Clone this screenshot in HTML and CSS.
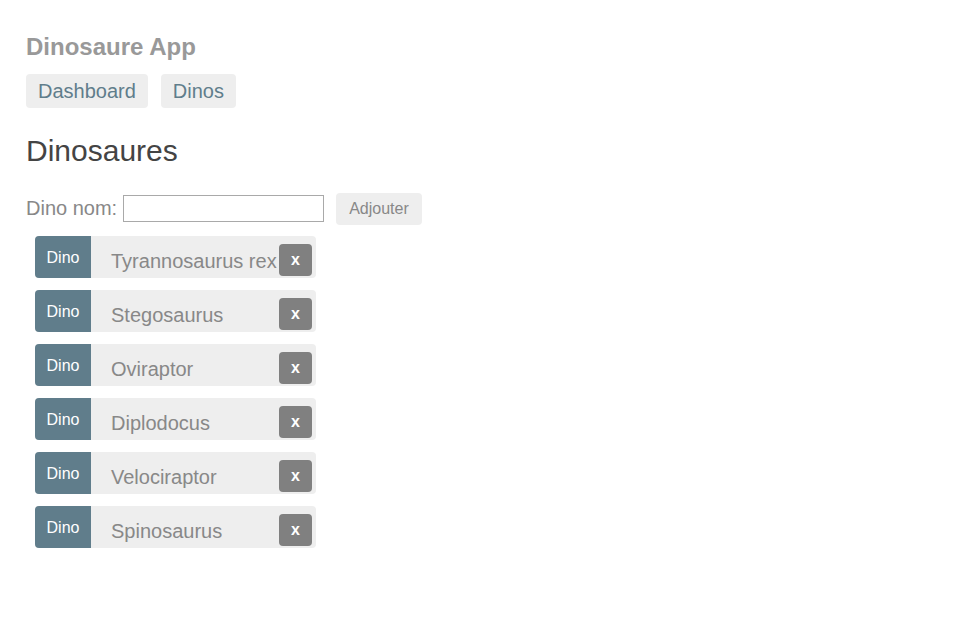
FILE: index.html
```html
<!DOCTYPE html>
<html lang="fr">
<head>
<meta charset="utf-8">
<title>Dinosaure App</title>
<link rel="stylesheet" href="styles.css">
</head>
<body>
<div class="app">
  <h1 class="app-title">Dinosaure App</h1>
  <nav class="nav">
    <a class="nav-link" href="#">Dashboard</a>
    <a class="nav-link" href="#">Dinos</a>
  </nav>
  <h2 class="page-title">Dinosaures</h2>
  <div class="add-row">
    <label class="add-label" for="dino-name">Dino nom:</label>
    <input class="add-input" id="dino-name" type="text">
    <button class="add-btn" type="button">Adjouter</button>
  </div>
  <ul class="dinos">
    <li class="dino"><span class="badge">Dino</span><span class="dino-name">Tyrannosaurus rex</span><button class="delete" type="button">x</button></li>
    <li class="dino"><span class="badge">Dino</span><span class="dino-name">Stegosaurus</span><button class="delete" type="button">x</button></li>
    <li class="dino"><span class="badge">Dino</span><span class="dino-name">Oviraptor</span><button class="delete" type="button">x</button></li>
    <li class="dino"><span class="badge">Dino</span><span class="dino-name">Diplodocus</span><button class="delete" type="button">x</button></li>
    <li class="dino"><span class="badge">Dino</span><span class="dino-name">Velociraptor</span><button class="delete" type="button">x</button></li>
    <li class="dino"><span class="badge">Dino</span><span class="dino-name">Spinosaurus</span><button class="delete" type="button">x</button></li>
  </ul>
</div>
</body>
</html>
```

FILE: styles.css
```css
html, body {
  margin: 0;
  padding: 0;
  background: #fff;
}

body {
  font-family: "Liberation Sans", Arial, sans-serif;
  color: #888;
}

.app {
  padding: 33px 26px;
}

.app-title {
  margin: 0;
  font-size: 24px;
  line-height: 28px;
  font-weight: bold;
  color: #999;
}

.nav {
  display: flex;
  gap: 13px;
  margin-top: 13px;
}

.nav-link {
  display: block;
  padding: 6px 12px;
  font-size: 20px;
  line-height: 22px;
  color: #607d8b;
  background: #eee;
  border-radius: 4px;
  text-decoration: none;
}

.page-title {
  margin: 26px 0 0;
  font-size: 30px;
  line-height: 34px;
  font-weight: normal;
  color: #444;
}

.add-row {
  display: flex;
  align-items: flex-start;
  margin-top: 25px;
}

.add-label {
  margin-top: 4px;
  font-size: 20px;
  line-height: 23px;
  color: #888;
}

.add-input {
  box-sizing: border-box;
  width: 201px;
  height: 27px;
  margin: 2px 0 0 6px;
  padding: 1px 4px;
  border: 1px solid #a9a9a9;
  font-family: "Liberation Sans", Arial, sans-serif;
  font-size: 16px;
  color: #333;
  background: #fff;
  outline: none;
}

.add-btn {
  box-sizing: border-box;
  height: 32px;
  margin-left: 12px;
  padding: 7px 13px;
  border: none;
  border-radius: 4px;
  background: #eee;
  color: #888;
  font-family: "Liberation Sans", Arial, sans-serif;
  font-size: 16px;
  line-height: 18px;
}

.dinos {
  list-style: none;
  margin: 11px 0 0 9px;
  padding: 0;
  display: flex;
  flex-direction: column;
  gap: 12px;
}

.dino {
  display: flex;
  align-items: flex-start;
  width: 281px;
  height: 42px;
  background: #eee;
  border-radius: 4px;
}

.badge {
  box-sizing: border-box;
  width: 56px;
  height: 42px;
  padding-top: 13px;
  text-align: center;
  font-size: 16px;
  line-height: 18px;
  color: #fff;
  background: #607d8b;
  border-radius: 4px 0 0 4px;
}

.dino-name {
  margin-left: 20px;
  padding-top: 14px;
  font-size: 20px;
  line-height: 23px;
  color: #888;
  white-space: nowrap;
}

.delete {
  box-sizing: border-box;
  width: 33px;
  height: 32px;
  margin: 8px 4px 0 auto;
  padding: 0;
  border: none;
  border-radius: 4px;
  background: #808080;
  color: #fff;
  font-family: "Liberation Sans", Arial, sans-serif;
  font-size: 16px;
  font-weight: bold;
  line-height: 32px;
}
```
